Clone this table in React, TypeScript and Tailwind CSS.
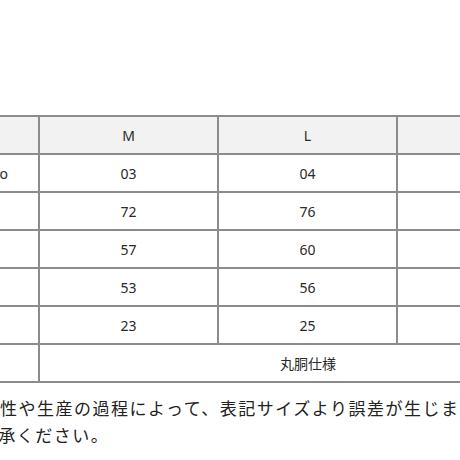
import React from 'react';

const rows: { label: string; m: string; l: string; xl: string }[] = [
    { label: 'No', m: '03', l: '04', xl: '05' },
    { label: '', m: '72', l: '76', xl: '80' },
    { label: '', m: '57', l: '60', xl: '63' },
    { label: '', m: '53', l: '56', xl: '59' },
    { label: '', m: '23', l: '25', xl: '27' },
];

const cell = 'border-2 border-[#8c8c8c] h-[38px] p-0 text-center align-middle';

export default function App() {
    return (
        <div
            className="w-[460px] h-[460px] overflow-hidden bg-white text-[#2a2a2a]"
            style={{ fontFamily: '"Noto Sans", "Noto Sans CJK JP", sans-serif' }}
        >
            <table className="table-fixed border-collapse ml-[-143px] mt-[115px] text-[14px] w-[719px]">
                <colgroup>
                    <col className="w-[181px]" />
                    <col className="w-[179px]" />
                    <col className="w-[179px]" />
                    <col className="w-[180px]" />
                </colgroup>
                <thead>
                    <tr className="bg-[#f2f2f2]">
                        <th className={`${cell} font-normal`}>サイズ</th>
                        <th className={`${cell} font-normal`}>M</th>
                        <th className={`${cell} font-normal`}>L</th>
                        <th className={`${cell} font-normal`}>XL</th>
                    </tr>
                </thead>
                <tbody>
                    {rows.map((r, i) => (
                        <tr key={i}>
                            <td className={`${cell} !text-right pr-[30px]`}>{r.label}</td>
                            <td className={cell}>{r.m}</td>
                            <td className={cell}>{r.l}</td>
                            <td className={cell}>{r.xl}</td>
                        </tr>
                    ))}
                    <tr>
                        <td className={cell}></td>
                        <td className={cell} colSpan={3}>丸胴仕様</td>
                    </tr>
                </tbody>
            </table>
            <p className="ml-[-74px] mt-[12px] w-[545px] text-[17px] leading-[27px] tracking-[1.5px] text-[#222]">
                商品の特性や生産の過程によって、表記サイズより誤差が生じます。ご了承ください。
            </p>
        </div>
    );
}
